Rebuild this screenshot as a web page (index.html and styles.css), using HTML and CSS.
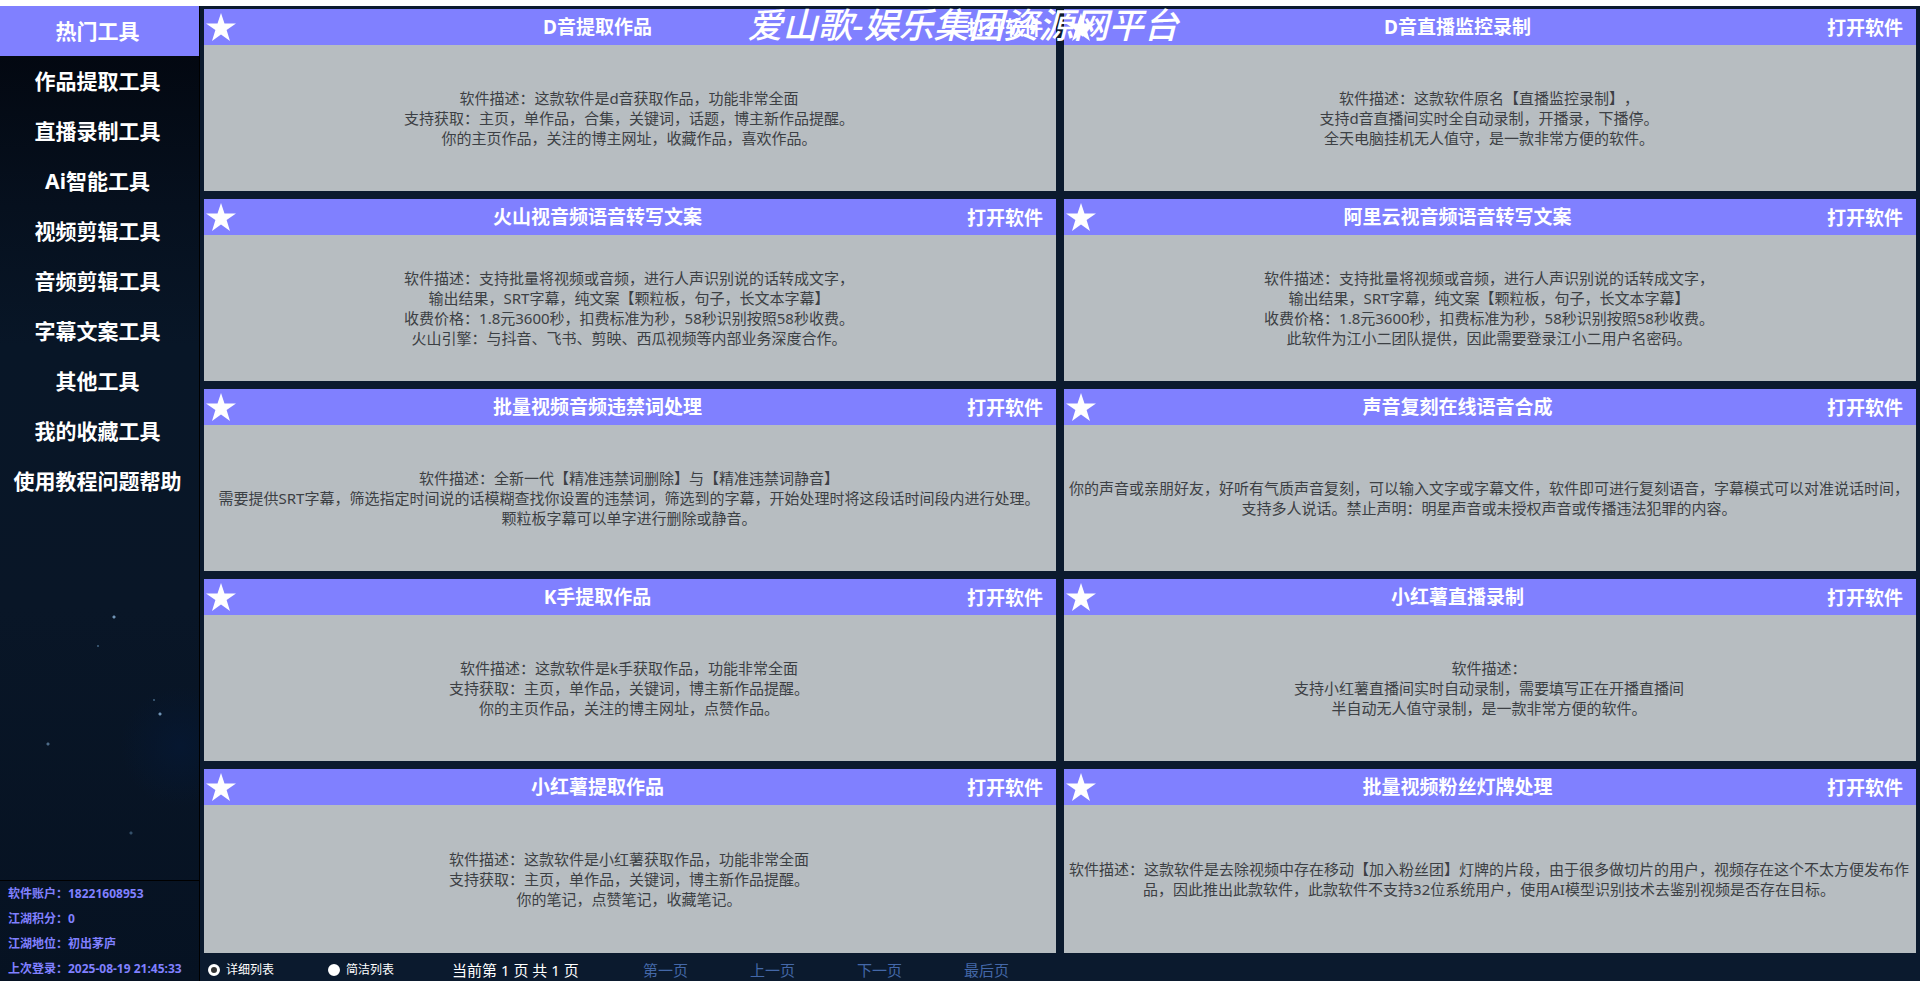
FILE: index.html
```
<!DOCTYPE html>
<html lang="zh-CN">
<head>
    <meta charset="UTF-8">
    <meta name="viewport" content="width=device-width, initial-scale=1.0">
    <title>热门工具</title>
    <link rel="stylesheet" href="styles.css">
</head>
<body>

    <div class="banner">爱山歌-娱乐集团资源网平台</div>

    <div class="layout">
        <aside class="sidebar">
            <nav class="menu">
                <a class="active" href="#hot">热门工具</a>
                <a href="#works">作品提取工具</a>
                <a href="#live">直播录制工具</a>
                <a href="#ai">Ai智能工具</a>
                <a href="#video">视频剪辑工具</a>
                <a href="#audio">音频剪辑工具</a>
                <a href="#subtitle">字幕文案工具</a>
                <a href="#other">其他工具</a>
                <a href="#favorites">我的收藏工具</a>
                <a href="#help">使用教程问题帮助</a>
            </nav>
            <div class="account">
                <p>软件账户：18221608953</p>
                <p>江湖积分：0</p>
                <p>江湖地位：初出茅庐</p>
                <p>上次登录：2025-08-19 21:45:33</p>
            </div>
        </aside>

        <main class="content">
            <div class="cards" id="cards"></div>

            <footer class="pager">
                <label><input type="radio" name="view" checked>详细列表</label>
                <label><input type="radio" name="view">简洁列表</label>
                <span class="page-info">当前第 1 页 共 1 页</span>
                <a href="#first">第一页</a>
                <a href="#prev">上一页</a>
                <a href="#next">下一页</a>
                <a href="#last">最后页</a>
            </footer>
        </main>
    </div>

    <script src="tools.js"></script>
</body>
</html>
```
FILE: tools.js
```
const tools = [
    {
        name: 'D音提取作品',
        lines: [
            '软件描述：这款软件是d音获取作品，功能非常全面',
            '支持获取：主页，单作品，合集，关键词，话题，博主新作品提醒。',
            '你的主页作品，关注的博主网址，收藏作品，喜欢作品。'
        ]
    },
    {
        name: 'D音直播监控录制',
        lines: [
            '软件描述：这款软件原名【直播监控录制】，',
            '支持d音直播间实时全自动录制，开播录，下播停。',
            '全天电脑挂机无人值守，是一款非常方便的软件。'
        ]
    },
    {
        name: '火山视音频语音转写文案',
        lines: [
            '软件描述：支持批量将视频或音频，进行人声识别说的话转成文字，',
            '输出结果，SRT字幕，纯文案【颗粒板，句子，长文本字幕】',
            '收费价格：1.8元3600秒，扣费标准为秒，58秒识别按照58秒收费。',
            '火山引擎：与抖音、飞书、剪映、西瓜视频等内部业务深度合作。'
        ]
    },
    {
        name: '阿里云视音频语音转写文案',
        lines: [
            '软件描述：支持批量将视频或音频，进行人声识别说的话转成文字，',
            '输出结果，SRT字幕，纯文案【颗粒板，句子，长文本字幕】',
            '收费价格：1.8元3600秒，扣费标准为秒，58秒识别按照58秒收费。',
            '此软件为江小二团队提供，因此需要登录江小二用户名密码。'
        ]
    },
    {
        name: '批量视频音频违禁词处理',
        lines: [
            '软件描述：全新一代【精准违禁词删除】与【精准违禁词静音】',
            '需要提供SRT字幕，筛选指定时间说的话模糊查找你设置的违禁词，筛选到的字幕，开始处理时将这段话时间段内进行处理。',
            '颗粒板字幕可以单字进行删除或静音。'
        ]
    },
    {
        name: '声音复刻在线语音合成',
        lines: [
            '你的声音或亲朋好友，好听有气质声音复刻，可以输入文字或字幕文件，软件即可进行复刻语音，字幕模式可以对准说话时间，',
            '支持多人说话。禁止声明：明星声音或未授权声音或传播违法犯罪的内容。'
        ]
    },
    {
        name: 'K手提取作品',
        lines: [
            '软件描述：这款软件是k手获取作品，功能非常全面',
            '支持获取：主页，单作品，关键词，博主新作品提醒。',
            '你的主页作品，关注的博主网址，点赞作品。'
        ]
    },
    {
        name: '小红薯直播录制',
        lines: [
            '软件描述：',
            '支持小红薯直播间实时自动录制，需要填写正在开播直播间',
            '半自动无人值守录制，是一款非常方便的软件。'
        ]
    },
    {
        name: '小红薯提取作品',
        lines: [
            '软件描述：这款软件是小红薯获取作品，功能非常全面',
            '支持获取：主页，单作品，关键词，博主新作品提醒。',
            '你的笔记，点赞笔记，收藏笔记。'
        ]
    },
    {
        name: '批量视频粉丝灯牌处理',
        lines: [
            '软件描述：这款软件是去除视频中存在移动【加入粉丝团】灯牌的片段，由于很多做切片的用户，视频存在这个不太方便发布作品，因此推出此款软件，此款软件不支持32位系统用户，使用AI模型识别技术去鉴别视频是否存在目标。'
        ]
    }
];

const container = document.getElementById('cards');

tools.forEach(tool => {
    const cardHTML = `
      <section class="card">
        <header class="card-head">
          <button class="star" aria-label="收藏">
            <svg viewBox="0 0 30 28" width="30" height="28"><path d="M15 0L18.500 10.500H30L20.600 17L24 28L15 21.500L6 28L9.400 17L0 10.500H11.500Z" fill="#fff"/></svg>
          </button>
          <h2>${tool.name}</h2>
          <button class="open">打开软件</button>
        </header>
        <p class="card-desc">${tool.lines.join('<br>')}</p>
      </section>
    `;
    container.insertAdjacentHTML('beforeend', cardHTML);
});
```
FILE: styles.css
```
* {
    box-sizing: border-box;
}

body {
    display: flex;
    flex-direction: column;
    min-height: 100vh;
    margin: 0;
    padding-top: 6px;
    background-color: #fff;
    font-family: "Noto Sans", "Noto Sans CJK SC", sans-serif;
    text-spacing-trim: space-all;
    color: #fff;
}

a {
    text-decoration: none;
}

button {
    padding: 0;
    border: none;
    background: none;
    color: #fff;
    font-family: inherit;
    cursor: pointer;
}

/* 顶部浮动标题 */
.banner {
    position: absolute;
    top: 0;
    left: 0;
    right: 0;
    z-index: 1;
    padding-left: 6px;
    font-size: 35px;
    line-height: 50px;
    font-style: italic;
    font-weight: 500;
    text-align: center;
    pointer-events: none;
}

.layout {
    display: flex;
    flex: 1;
    background-color: #0b1a2e;
}

.sidebar {
    display: flex;
    flex-direction: column;
    justify-content: space-between;
    width: 200px;
    flex-shrink: 0;
    border-right: 1px solid #000;
    background:
        radial-gradient(circle at 114px 611px, #6f93b5 0 1px, transparent 2px),
        radial-gradient(circle at 160px 708px, #6f93b5 0 1px, transparent 2px),
        radial-gradient(circle at 154px 694px, #34506a 0 1px, transparent 1px),
        radial-gradient(circle at 98px 640px, #34506a 0 1px, transparent 1px),
        radial-gradient(circle at 48px 738px, #4d6b88 0 1px, transparent 2px),
        radial-gradient(circle at 131px 827px, #34506a 0 1px, transparent 2px),
        radial-gradient(circle at 180px 740px, #061730, transparent 60px),
        linear-gradient(#030811 50px, #06101e 200px, #081627 340px, #091627 600px, #061222);
}

.menu a {
    display: block;
    padding-right: 4px;
    color: #fff;
    font-size: 21px;
    font-weight: bold;
    line-height: 50px;
    text-align: center;
}

.menu a.active {
    background-color: #8080ff;
}

.account {
    border-top: 1px solid #000;
    padding-left: 8px;
    color: #8080ff;
    font-size: 12px;
    font-weight: bold;
    line-height: 25px;
}

.account p {
    margin: 0;
}

.content {
    display: flex;
    flex-direction: column;
    flex: 1;
    padding: 3px 4px 0;
}

.cards {
    display: grid;
    grid-template-columns: repeat(2, 1fr);
    grid-template-rows: repeat(4, 182px);
    grid-auto-rows: 1fr;
    gap: 8px;
    flex: 1;
}

.card {
    display: flex;
    flex-direction: column;
    background-color: #b7bdc1;
}

.card-head {
    display: flex;
    align-items: center;
    height: 36px;
    padding: 0 13px 0 2px;
    background-color: #8080ff;
}

.card-head h2 {
    flex: 1;
    margin: 0;
    padding-right: 8px;
    font-size: 19px;
    line-height: 36px;
    text-align: center;
}

.star {
    height: 28px;
}

.star svg {
    display: block;
}

.open {
    font-size: 19px;
    font-weight: bold;
}

.card-desc {
    margin: auto 0;
    padding: 0 6px 0 4px;
    color: #3c4044;
    font-size: 15px;
    line-height: 20px;
    text-align: center;
}

/* 底部翻页 */
.pager {
    display: flex;
    align-items: center;
    height: 28px;
    padding-top: 6px;
    overflow: hidden;
    font-size: 15px;
    line-height: 20px;
}

.pager label {
    display: flex;
    align-items: center;
    width: 120px;
    font-size: 12px;
}

.pager input {
    appearance: none;
    width: 12px;
    height: 12px;
    margin: 0 6px 0 4px;
    border: 3px solid #fff;
    border-radius: 50%;
    background-color: #fff;
}

.pager input:checked {
    background-color: #333;
}

.page-info {
    width: 199px;
    padding-left: 8px;
}

.pager a {
    width: 107px;
    color: #4468a8;
}
```
